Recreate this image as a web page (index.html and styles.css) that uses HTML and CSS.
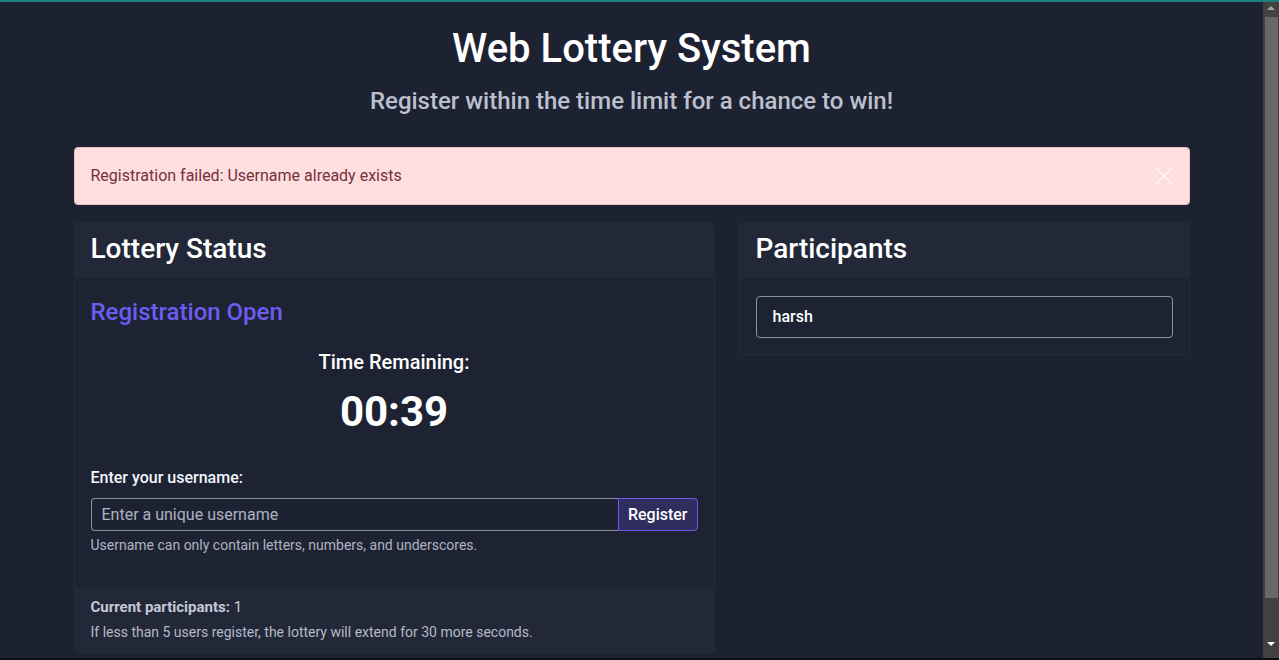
FILE: index.html
```html
<!DOCTYPE html>
<html lang="en">
<head>
<meta charset="utf-8">
<title>Web Lottery System</title>
<link rel="stylesheet" href="styles.css">
</head>
<body>
<div class="frame-top"></div>
<div class="page">
<div class="container">
  <header class="page-header">
    <h1 class="title">Web Lottery System</h1>
    <p class="subtitle">Register within the time limit for a chance to win!</p>
  </header>

  <div class="alert">
    <span class="alert-text">Registration failed: Username already exists</span>
    <button class="alert-close" aria-label="Close">
      <svg width="18" height="18" viewBox="0 0 18 18"><path d="M1 1L17 17M17 1L1 17" stroke="currentColor" stroke-width="1.6" fill="none"/></svg>
    </button>
  </div>

  <div class="row">
    <section class="card card-status">
      <div class="card-header"><h3>Lottery Status</h3></div>
      <div class="card-body">
        <h4 class="status-open">Registration Open</h4>
        <div class="timer">
          <h5 class="timer-label">Time Remaining:</h5>
          <div class="timer-value">00:39</div>
        </div>
        <form class="reg-form">
          <label class="form-label" for="username">Enter your username:</label>
          <div class="input-group">
            <input id="username" class="form-input" type="text" placeholder="Enter a unique username">
            <button type="button" class="btn-register">Register</button>
          </div>
          <div class="form-help">Username can only contain letters, numbers, and underscores.</div>
        </form>
      </div>
      <div class="card-footer">
        <div class="count"><strong>Current participants:</strong> 1</div>
        <div class="note">If less than 5 users register, the lottery will extend for 30 more seconds.</div>
      </div>
    </section>

    <section class="card card-participants">
      <div class="card-header"><h3>Participants</h3></div>
      <div class="card-body card-body-list">
        <ul class="plist">
          <li class="pitem">harsh</li>
        </ul>
      </div>
    </section>
  </div>
</div>
</div>
<div class="scrollbar">
  <div class="sb-arrow sb-up"></div>
  <div class="sb-thumb"></div>
  <div class="sb-arrow sb-down"></div>
</div>
<div class="frame-bottom"></div>
</body>
</html>
```

FILE: styles.css
```css
* { box-sizing: border-box; }

html, body {
  margin: 0;
  padding: 0;
}

body {
  background: #1d2233;
  color: #f3f5fa;
  font-family: "Roboto", "Liberation Sans", sans-serif;
  font-size: 16px;
  line-height: 1.5;
}

.page {
  margin-right: 16px;
}

.frame-top {
  position: fixed;
  top: 0; left: 0; right: 0;
  height: 2px;
  background: #1f7e7e;
  z-index: 10;
}
.frame-bottom {
  position: fixed;
  bottom: 0; left: 0; right: 0;
  height: 2px;
  background: #0c0e14;
  z-index: 10;
}

.scrollbar {
  position: fixed;
  top: 0; right: 0; bottom: 0;
  width: 16px;
  background: #414141;
  display: flex;
  flex-direction: column;
  align-items: center;
  padding-top: 6px;
  z-index: 5;
}
.sb-arrow {
  width: 0;
  height: 0;
  border-left: 4px solid transparent;
  border-right: 4px solid transparent;
}
.sb-up {
  border-bottom: 4px solid #a3a3a3;
}
.sb-thumb {
  width: 13px;
  margin-left: 1px;
  height: 581px;
  margin-top: 7px;
  background: #686868;
}
.sb-down {
  margin-top: 44px;
  border-top: 4px solid #ffffff;
}

.container {
  max-width: 1140px;
  margin: 0 auto;
  padding: 25px 12px 40px;
}

.page-header {
  text-align: center;
  margin-bottom: 32px;
}

.title {
  margin: 0 0 14px;
  font-size: 40px;
  line-height: 48px;
  font-weight: 500;
  color: #ffffff;
}

.subtitle {
  margin: 0;
  font-size: 24px;
  line-height: 28px;
  font-weight: 500;
  color: #bcc0cc;
}

.alert {
  display: flex;
  align-items: center;
  justify-content: space-between;
  background: #ffdee0;
  border: 1px solid #f6bcc1;
  border-radius: 4px;
  padding: 16px 16px;
  margin-bottom: 17px;
  color: #74323a;
  font-size: 16px;
  line-height: 24px;
}

.alert-close {
  background: none;
  border: 0;
  padding: 0;
  width: 18px;
  height: 18px;
  color: rgba(255, 255, 255, 0.75);
  display: flex;
}

.row {
  display: grid;
  grid-template-columns: 641px 451px;
  gap: 24px;
  align-items: start;
}

.card {
  background: #1e2333;
  border: 1px solid #252a3b;
  border-radius: 4px;
  overflow: hidden;
}

.card-header {
  background: #232839;
  padding: 9px 16px 13px;
}

.card-header h3 {
  margin: 0;
  font-size: 28px;
  line-height: 33px;
  font-weight: 500;
  color: #ffffff;
}

.card-body {
  padding: 20px 16px 16px;
}

.card-body-list {
  padding-top: 17px;
}

.status-open {
  margin: 0;
  font-size: 24px;
  line-height: 29px;
  font-weight: 500;
  color: #6c5cf2;
}

.timer {
  text-align: center;
  margin-top: 23px;
}

.timer-label {
  margin: 0;
  font-size: 20px;
  line-height: 24px;
  font-weight: 500;
  color: #ffffff;
}

.timer-value {
  margin-top: 14px;
  font-size: 42px;
  line-height: 48px;
  font-weight: 700;
  color: #ffffff;
}

.reg-form {
  margin-top: 30px;
  padding-bottom: 16px;
}

.form-label {
  display: block;
  font-size: 16px;
  line-height: 24px;
  font-weight: 500;
  margin-bottom: 8px;
}

.input-group {
  display: flex;
  height: 33px;
}

.form-input {
  flex: 1;
  min-width: 0;
  background: #1d2233;
  border: 1px solid #8a90a2;
  border-right: 0;
  border-radius: 4px 0 0 4px;
  color: #f3f5fa;
  font-family: inherit;
  font-size: 16px;
  padding: 0 10px;
}

.form-input::placeholder {
  color: #adb2c0;
  opacity: 1;
}

.btn-register {
  background: #2f2c5e;
  border: 1px solid #6a5bea;
  border-radius: 0 4px 4px 0;
  color: #ffffff;
  font-family: inherit;
  font-size: 16px;
  font-weight: 500;
  padding: 0 9px;
}

.form-help {
  margin-top: 4px;
  font-size: 14px;
  line-height: 21px;
  color: #aeb3c1;
}

.card-footer {
  background: #232839;
  padding: 8px 16px 10px;
}

.count {
  font-size: 15px;
  line-height: 22px;
  color: #c5c9d5;
}

.count strong {
  font-weight: 700;
}

.note {
  margin-top: 5px;
  font-size: 14px;
  line-height: 19px;
  color: #b5bac7;
}

.plist {
  list-style: none;
  margin: 1px 0 0;
  padding: 0;
}

.pitem {
  border: 1px solid #8d93a4;
  border-radius: 4px;
  padding: 8px 16px;
  font-weight: 500;
  line-height: 24px;
  color: #ffffff;
}
```
